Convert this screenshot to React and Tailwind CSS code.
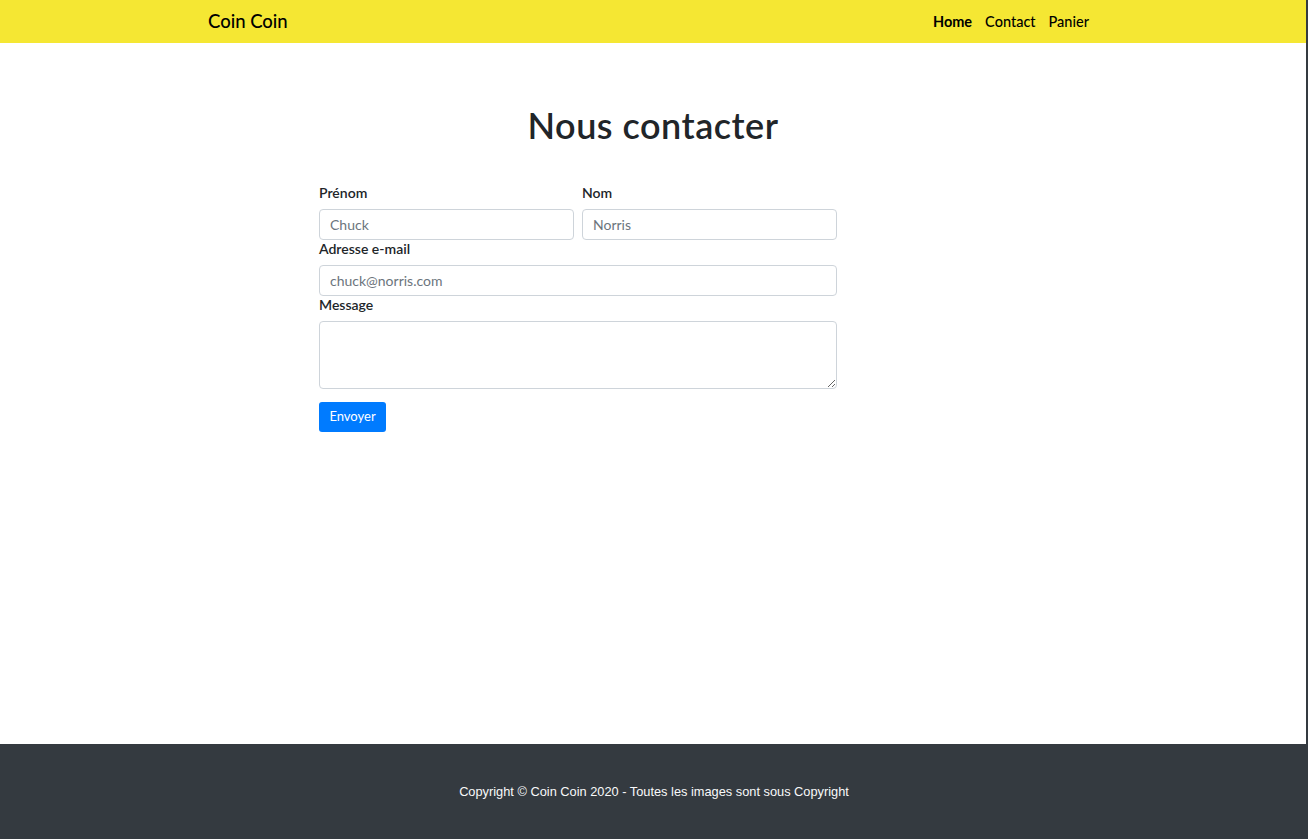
import React, { useState } from 'react';

const gothic = { fontFamily: '"Lato", "DejaVu Sans", sans-serif' };

const Field = ({ label, children }) => (
    <div className="flex flex-col">
        <label className="text-[14px] leading-[17px] mb-2 font-semibold text-[#212529]" style={gothic}>{label}</label>
        {children}
    </div>
);

const inputCls = "w-full h-[31px] border border-[#ced4da] rounded-[4px] px-[10px] text-[14px] text-[#495057] placeholder:text-[#6c757d] outline-none font-['Lato',sans-serif]";

const App = () => {
    const [form, setForm] = useState({ prenom: '', nom: '', email: '', message: '' });

    return (
        <div className="min-h-screen bg-[#343a40] flex flex-col">
            <div className="w-[1306px] flex flex-col bg-white">
                <nav className="h-[43px] bg-[#f5e733]">
                    <div className="w-[890px] mx-auto h-full flex items-center justify-between" style={gothic}>
                        <span className="text-[18.5px] font-medium text-black">Coin Coin</span>
                        <div className="flex items-center gap-[13px] text-[14.5px] text-black mr-[9px]">
                            <a className="font-bold">Home</a>
                            <a className="font-medium">Contact</a>
                            <a className="font-medium">Panier</a>
                        </div>
                    </div>
                </nav>

                <main className="h-[701px] pt-[61px]">
                    <h1 className="text-center text-[36px] leading-[43px] font-semibold text-[#212529] tracking-[0.5px]" style={gothic}>Nous contacter</h1>

                    <form className="w-[518px] ml-[319px] mt-[37px]" onSubmit={e => e.preventDefault()}>
                        <div className="grid grid-cols-2 gap-x-[8px]">
                            <Field label="Prénom">
                                <input className={inputCls} placeholder="Chuck" value={form.prenom} onChange={e => setForm({ ...form, prenom: e.target.value })} />
                            </Field>
                            <Field label="Nom">
                                <input className={inputCls} placeholder="Norris" value={form.nom} onChange={e => setForm({ ...form, nom: e.target.value })} />
                            </Field>
                        </div>
                        <Field label="Adresse e-mail">
                            <input type="email" className={inputCls} placeholder="chuck@norris.com" value={form.email} onChange={e => setForm({ ...form, email: e.target.value })} />
                        </Field>
                        <Field label="Message">
                            <textarea className="w-full h-[68px] border border-[#ced4da] rounded-[4px] px-[10px] py-[5px] text-[14px] outline-none block" value={form.message} onChange={e => setForm({ ...form, message: e.target.value })} />
                        </Field>
                        <button type="submit" className="mt-[13px] h-[30px] w-[67px] bg-[#007bff] text-white text-[13px] rounded-[3px] font-['Lato',sans-serif]">Envoyer</button>
                    </form>
                </main>
            </div>

            <footer className="h-[95px] bg-[#343a40] flex items-center justify-center">
                <p className="text-[12.8px] text-[#f8f9fa] font-['Liberation_Sans',Arial,sans-serif]">Copyright © Coin Coin 2020 - Toutes les images sont sous Copyright</p>
            </footer>
        </div>
    );
};

export default App;
